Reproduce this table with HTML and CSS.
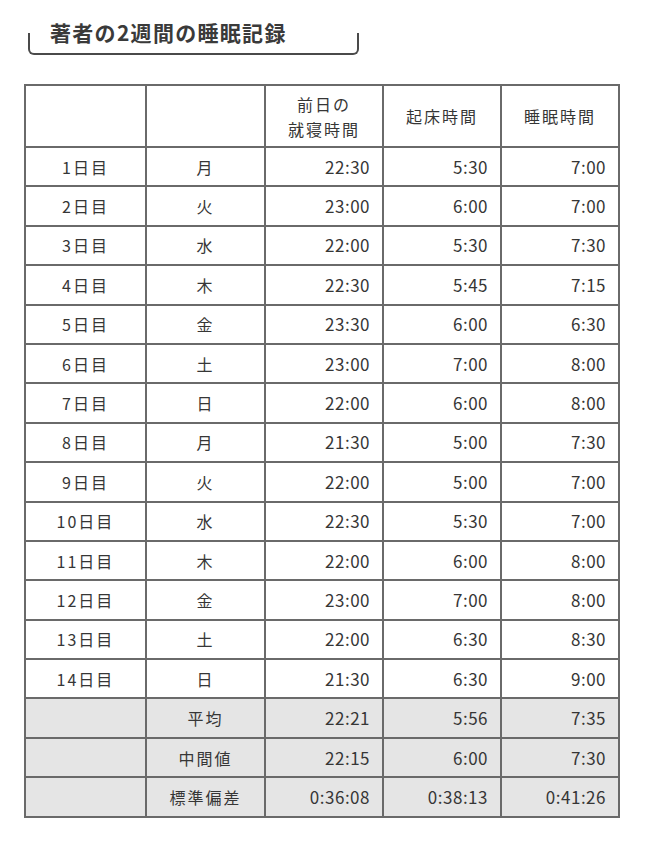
FILE: index.html
```html
<!DOCTYPE html>
<html lang="ja">
<head>
<meta charset="utf-8">
<title>著者の2週間の睡眠記録</title>
<link rel="stylesheet" href="styles.css">
</head>
<body>
<div class="page">
  <div class="title-box">
    <h1 class="title">著者の2週間の睡眠記録</h1>
  </div>
  <table class="sleep">
    <colgroup>
      <col class="col-day">
      <col class="col-week">
      <col class="col-bed">
      <col class="col-wake">
      <col class="col-sleep">
    </colgroup>
    <thead>
      <tr>
        <th></th>
        <th></th>
        <th>前日の<br>就寝時間</th>
        <th>起床時間</th>
        <th>睡眠時間</th>
      </tr>
    </thead>
    <tbody>
      <tr><td class="c">1日目</td><td class="c">月</td><td class="r">22:30</td><td class="r">5:30</td><td class="r">7:00</td></tr>
      <tr><td class="c">2日目</td><td class="c">火</td><td class="r">23:00</td><td class="r">6:00</td><td class="r">7:00</td></tr>
      <tr><td class="c">3日目</td><td class="c">水</td><td class="r">22:00</td><td class="r">5:30</td><td class="r">7:30</td></tr>
      <tr><td class="c">4日目</td><td class="c">木</td><td class="r">22:30</td><td class="r">5:45</td><td class="r">7:15</td></tr>
      <tr><td class="c">5日目</td><td class="c">金</td><td class="r">23:30</td><td class="r">6:00</td><td class="r">6:30</td></tr>
      <tr><td class="c">6日目</td><td class="c">土</td><td class="r">23:00</td><td class="r">7:00</td><td class="r">8:00</td></tr>
      <tr><td class="c">7日目</td><td class="c">日</td><td class="r">22:00</td><td class="r">6:00</td><td class="r">8:00</td></tr>
      <tr><td class="c">8日目</td><td class="c">月</td><td class="r">21:30</td><td class="r">5:00</td><td class="r">7:30</td></tr>
      <tr><td class="c">9日目</td><td class="c">火</td><td class="r">22:00</td><td class="r">5:00</td><td class="r">7:00</td></tr>
      <tr><td class="c">10日目</td><td class="c">水</td><td class="r">22:30</td><td class="r">5:30</td><td class="r">7:00</td></tr>
      <tr><td class="c">11日目</td><td class="c">木</td><td class="r">22:00</td><td class="r">6:00</td><td class="r">8:00</td></tr>
      <tr><td class="c">12日目</td><td class="c">金</td><td class="r">23:00</td><td class="r">7:00</td><td class="r">8:00</td></tr>
      <tr><td class="c">13日目</td><td class="c">土</td><td class="r">22:00</td><td class="r">6:30</td><td class="r">8:30</td></tr>
      <tr><td class="c">14日目</td><td class="c">日</td><td class="r">21:30</td><td class="r">6:30</td><td class="r">9:00</td></tr>
      <tr class="stat"><td></td><td class="c">平均</td><td class="r">22:21</td><td class="r">5:56</td><td class="r">7:35</td></tr>
      <tr class="stat"><td></td><td class="c">中間値</td><td class="r">22:15</td><td class="r">6:00</td><td class="r">7:30</td></tr>
      <tr class="stat"><td></td><td class="c">標準偏差</td><td class="r">0:36:08</td><td class="r">0:38:13</td><td class="r">0:41:26</td></tr>
    </tbody>
  </table>
</div>
</body>
</html>
```

FILE: styles.css
```css
html, body {
  margin: 0;
  padding: 0;
  background: #ffffff;
}

body {
  font-family: "Noto Sans CJK JP", "Noto Sans", sans-serif;
  color: #363636;
}

.page {
  padding: 20px 0 0 24px;
}

.title-box {
  position: relative;
  width: 331px;
  margin-left: 4px;
  padding: 0 0 11px 22px;
  box-sizing: border-box;
}

.title-box::after {
  content: "";
  position: absolute;
  left: 0;
  right: 0;
  bottom: 0;
  height: 20px;
  border: 2px solid #4a4a4a;
  border-top: none;
  border-radius: 0 0 6px 6px;
}

.title {
  margin: 0;
  font-size: 21px;
  line-height: 24px;
  font-weight: 700;
  letter-spacing: 1.3px;
  color: #3a3a3a;
}

.sleep {
  margin-top: 29px;
  border-collapse: collapse;
  width: 594px;
  table-layout: fixed;
  border: 2px solid #5c5c5c;
}

.col-day { width: 121px; }
.col-week { width: 119px; }
.col-bed { width: 118px; }
.col-wake { width: 118px; }
.col-sleep { width: 118px; }

.sleep th,
.sleep td {
  border: 2px solid #6a6a6a;
  padding: 0;
  font-weight: 400;
}

.sleep th {
  height: 59px;
  font-size: 16px;
  line-height: 25px;
  letter-spacing: 2px;
  text-align: center;
  padding-top: 1px;
}

.sleep td {
  height: 37.4px;
  font-size: 17px;
  line-height: 20px;
}

.sleep td.c {
  text-align: center;
  letter-spacing: 2px;
  font-size: 16px;
}

.sleep td.r {
  text-align: right;
  padding-right: 12px;
  letter-spacing: 0.5px;
}

.sleep tr.stat td {
  background: #e5e5e5;
}
```
